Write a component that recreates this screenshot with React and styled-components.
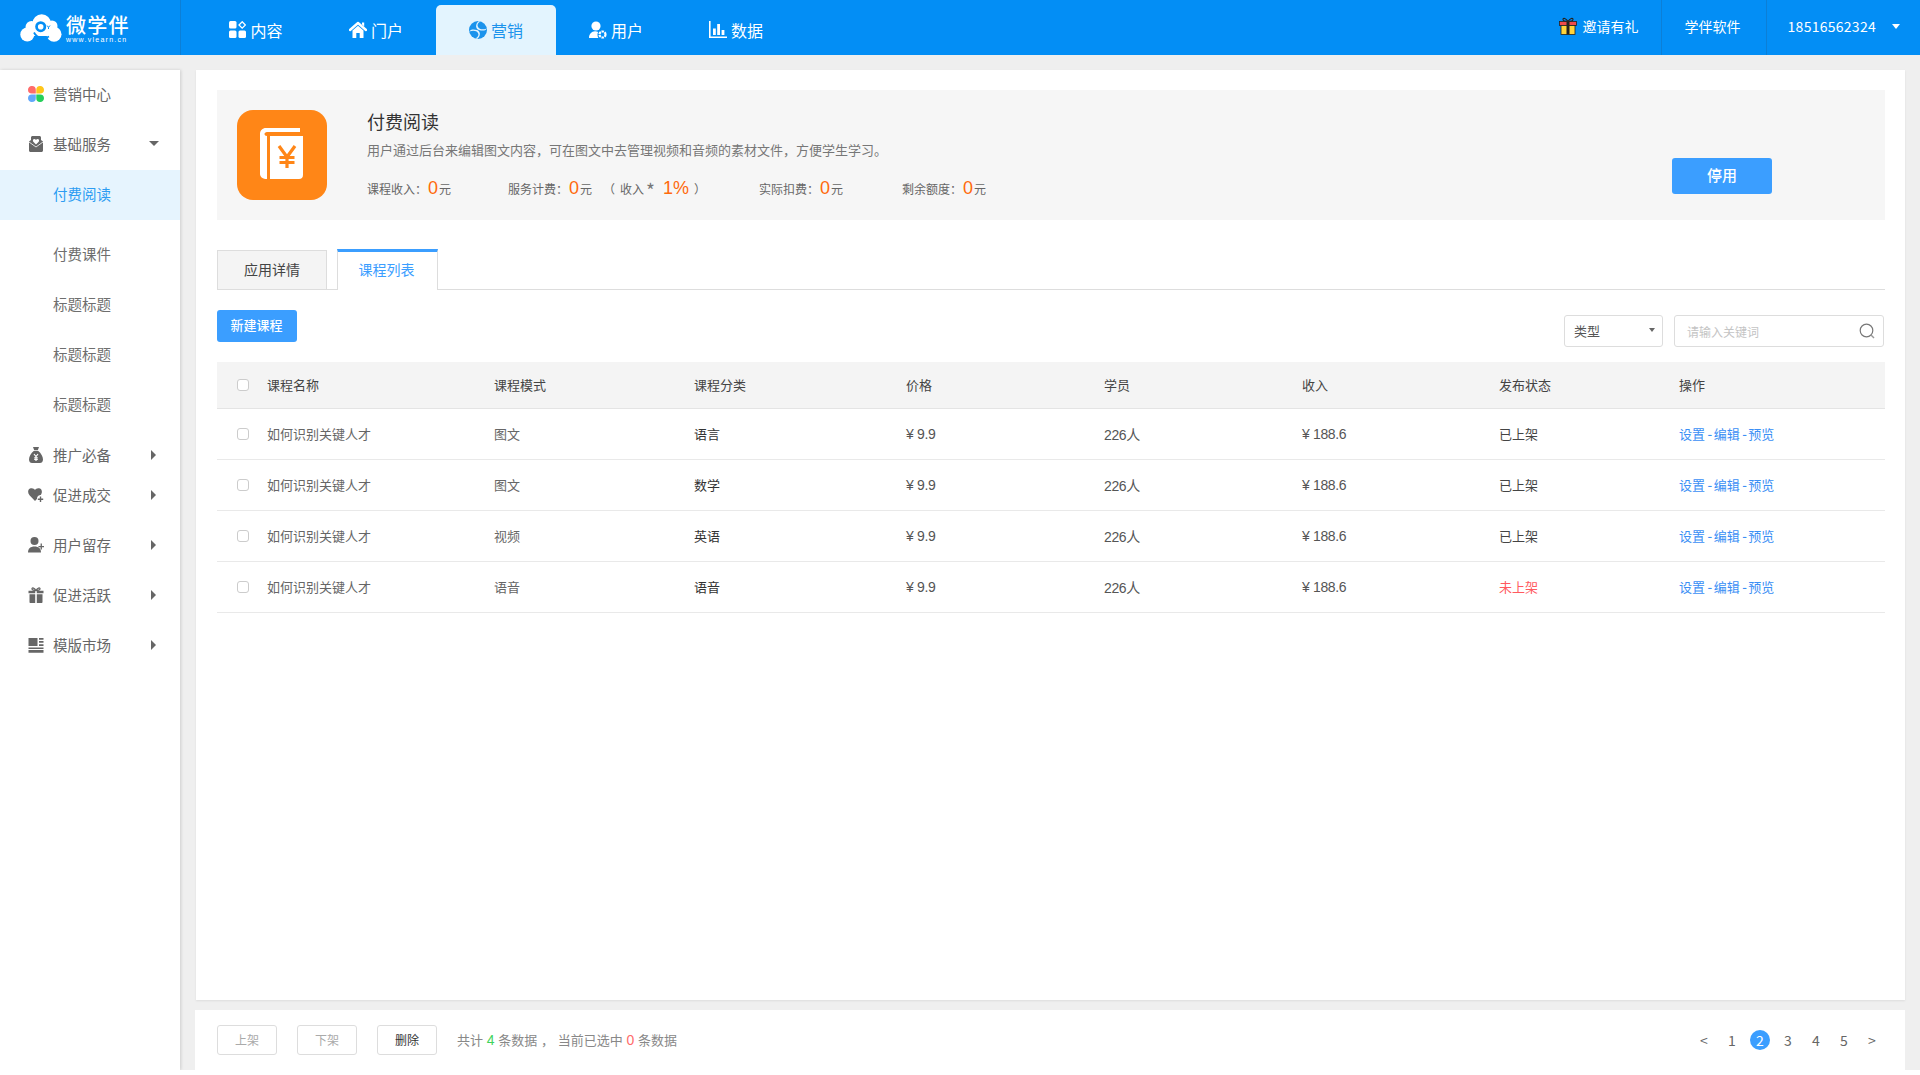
import React from "react";
import styled, { createGlobalStyle } from "styled-components";

const Global = createGlobalStyle`
  html, body { margin: 0; padding: 0; background: #fff; }
  body { font-family: "Liberation Sans", "Noto Sans CJK SC", sans-serif; color: #333; }
  * { box-sizing: border-box; }
`;

const Page = styled.div`
  width: 1920px; height: 1070px; overflow: hidden; background: #efefef;
  display: flex; flex-direction: column;
`;
const TopBar = styled.header`
  height: 55px; flex: none; background: #038ef5; display: flex; color: #fff;
  font-family: "Noto Sans CJK SC", sans-serif;
`;
const LogoBox = styled.div`
  width: 181px; flex: none; display: flex; align-items: center; padding-left: 20px; gap: 4px;
  border-right: 1px solid #0c7fd6;
`;
const LogoText = styled.div`display: flex; flex-direction: column; margin-top: 2px;`;
const LogoName = styled.div`font-size: 20px; line-height: 22px; letter-spacing: 1.2px; font-weight: 500;`;
const LogoSub = styled.div`
  font-family: "Liberation Sans", sans-serif; font-size: 7px; line-height: 9px; letter-spacing: 1.25px; margin-top: -1px;
`;
const Nav = styled.nav`display: flex; padding-left: 15px; align-items: flex-end; height: 55px;`;
const NavItem = styled.div`
  width: 120px; height: 50px; display: flex; align-items: center; justify-content: center; gap: 4px;
  padding-bottom: 1px; font-size: 16px; border-radius: 5px 5px 0 0;
  background: ${p => (p.$active ? "#e3f4fe" : "transparent")};
  color: ${p => (p.$active ? "#1b93ec" : "#fff")};
`;
const TopRight = styled.div`margin-left: auto; display: flex; font-size: 14px;`;
const Invite = styled.div`display: flex; align-items: center; gap: 6px; padding: 0 22px 3px 0;`;
const TopCell = styled.div`
  display: flex; align-items: center; border-left: 1px solid #0c7fd6; padding: 0 ${p => p.$pr}px 3px ${p => p.$pl}px;
  letter-spacing: ${p => p.$ls || 0}px;
`;
const PhoneGap = styled.span`width: 16px;`;
const CaretDown = styled.span`
  display: inline-block; width: 0; height: 0;
  border-left: ${p => p.$s}px solid transparent; border-right: ${p => p.$s}px solid transparent;
  border-top: ${p => p.$h}px solid ${p => p.$c};
  margin-right: ${p => p.$mr || 0}px;
`;
const CaretRight = styled.span`
  display: inline-block; width: 0; height: 0;
  border-top: 5px solid transparent; border-bottom: 5px solid transparent; border-left: 5px solid #666;
`;
const Body = styled.div`flex: 1; display: flex; padding-top: 15px; min-height: 0;`;
const Sidebar = styled.aside`
  width: 180px; flex: none; background: #fff; box-shadow: 1px 0 3px rgba(0,0,0,.14);
  font-family: "Noto Sans CJK SC", sans-serif; font-size: 14.5px; color: #666;
`;
const MenuRow = styled.div`
  height: ${p => p.$h || 50}px; margin-top: ${p => p.$mt || 0}px; display: flex; align-items: center;
  padding: 0 24px 3px 28px; gap: 9px;
`;
const IconSlot = styled.span`width: 16px; height: 16px; flex: none; display: flex;`;
const MenuLabel = styled.span`flex: 1;`;
const SubRow = styled.div`
  height: 50px; margin-top: ${p => p.$mt || 0}px; display: flex; align-items: center; padding: 0 0 3px 53px;
  background: ${p => (p.$active ? "#e6f4fe" : "transparent")};
  color: ${p => (p.$active ? "#2c9cf2" : "#6e6e6e")};
`;
const Content = styled.div`flex: 1; display: flex; flex-direction: column; gap: 10px; margin: 0 15px; min-width: 0;`;
const Main = styled.main`
  height: 930px; flex: none; background: #fff; padding: 20px 20px 0 21px; margin-left: 1px; box-shadow: 0 1px 2px rgba(0,0,0,.08);
`;
const Banner = styled.section`height: 130px; background: #f6f6f6; display: flex; padding: 20px;`;
const AppIcon = styled.div`
  width: 90px; height: 90px; flex: none; border-radius: 16px; background: #ff8617; display: flex;
`;
const BannerText = styled.div`margin-left: 40px; font-family: "Noto Sans CJK SC", sans-serif;`;
const Title = styled.h1`margin: -2px 0 0; font-size: 18px; line-height: 26px; font-weight: 400; color: #333;`;
const Desc = styled.p`margin: 7px 0 0; font-size: 13px; line-height: 18px; color: #777;`;
const Stats = styled.div`display: flex; margin-top: 19px; height: 24px; align-items: baseline; font-size: 12px; color: #666;`;
const Stat = styled.div`width: ${p => p.$w}px; flex: none; white-space: pre;`;
const Num = styled.span`
  font-family: "Liberation Sans", sans-serif; font-size: 18px; color: #ff6a0c;
  margin: 0 1px 0 ${p => p.$ml ?? 1}px;
`;
const Sep = styled.span`margin-left: ${p => p.$ml}px;`;
const Star = styled.span`margin-left: 2px; font-size: 19px; line-height: 1; vertical-align: -4px; color: #777;`;
const StopButton = styled.button`
  margin: 48px 93px 0 auto; width: 100px; height: 36px; border: 0; border-radius: 3px; background: #3b9eff; color: #fff; padding: 0 0 4px;
  font: 500 15px "Noto Sans CJK SC", sans-serif;
`;
const Tabs = styled.div`
  margin-top: 29px; height: 41px; display: flex; gap: 10px; border-bottom: 1px solid #ddd; align-items: flex-end;
  font-family: "Noto Sans CJK SC", sans-serif; font-size: 14px;
`;
const Tab = styled.div`
  width: ${p => (p.$active ? 101 : 110)}px; height: ${p => (p.$active ? 41 : 40)}px; display: flex; align-items: center; justify-content: center;
  margin-bottom: -1px;
  padding: 0 ${p => (p.$active ? 2 : 0)}px ${p => (p.$active ? 5 : 2)}px 0;
  background: ${p => (p.$active ? "#fff" : "#f4f4f4")};
  color: ${p => (p.$active ? "#3b9eff" : "#444")};
  border: 1px solid #ddd;
  border-top: ${p => (p.$active ? "3px solid #3b9eff" : "1px solid #ddd")};
  border-bottom: ${p => (p.$active ? "0" : "1px solid #ddd")};
`;
const Toolbar = styled.div`margin-top: 20px; height: 37px; display: flex; justify-content: space-between; font-family: "Noto Sans CJK SC", sans-serif;`;
const NewButton = styled.button`
  width: 80px; height: 32px; border: 0; border-radius: 3px; background: #3b9eff; color: #fff; padding: 0 1px 4px 0;
  font: 500 13px "Noto Sans CJK SC", sans-serif;
`;
const Filters = styled.div`display: flex; gap: 11px; margin-top: 5px; padding-right: 1px;`;
const Select = styled.div`
  width: 99px; height: 32px; border: 1px solid #ddd; border-radius: 3px; display: flex; align-items: center; justify-content: space-between;
  padding: 0 7px 2px 9px; font-size: 13px; color: #555;
`;
const SearchBox = styled.div`
  width: 210px; height: 32px; border: 1px solid #ddd; border-radius: 3px; display: flex; align-items: center; justify-content: space-between;
  padding: 0 8px 0 12px; font-size: 12px; color: #c4c4c4;
`;
const cols = "50px 227px 200px 212px 198px 198px 197px 180px 1fr";
const TableHead = styled.div`
  margin-top: 15px; height: 47px; background: #f4f4f4; border-bottom: 1px solid #e4e4e4; padding-bottom: 2px;
  display: grid; grid-template-columns: ${cols}; align-items: center; font-size: 13px; color: #444;
  font-family: "Noto Sans CJK SC", sans-serif;
`;
const TableRow = styled.div`
  height: 51px; border-bottom: 1px solid #e9e9e9; padding-bottom: 2px;
  display: grid; grid-template-columns: ${cols}; align-items: center; font-size: 13px; color: #666;
`;
const CheckCell = styled.div`padding: 2px 0 0 20px; display: flex;`;
const Check = styled.span`width: 12px; height: 12px; border: 1px solid #ccc; border-radius: 3px; background: #fff;`;
const Cell = styled.div`color: ${p => p.$c || "inherit"}; white-space: nowrap;`;
const NumCell = styled.div`font-size: 14px; letter-spacing: -.35px; white-space: nowrap; color: #555; padding-top: 1px;`;
const Ops = styled.div`display: flex; color: #3b8ff5; white-space: nowrap;`;
const Dash = styled.span`margin: 0 1.500px 0 2.500px; font-family: "Noto Sans CJK SC", sans-serif; font-weight: 500;`;
const Footer = styled.footer`
  height: 60px; flex: none; background: #fff; display: flex; align-items: center; padding: 0 19px 0 22px; font-family: "Noto Sans CJK SC", sans-serif;
`;
const FootBtn = styled.button`
  width: 60px; height: 30px; margin-right: 20px; border: 1px solid #ddd; border-radius: 3px; background: #fff; padding: 0 0 2px;
  font: 12px "Noto Sans CJK SC", sans-serif; color: ${p => (p.$on ? "#333" : "#aaa")};
`;
const Summary = styled.div`font-size: 13px; color: #888; white-space: pre; word-spacing: .8px; padding-bottom: 2px;`;
const Hi = styled.span`font-family: "Liberation Sans", sans-serif; font-size: 14px; color: ${p => p.$c};`;
const Pager = styled.div`margin-left: auto; display: flex; font-size: 14px; color: #666;`;
const PageItem = styled.span`
  width: 28px; height: 20px; display: flex; align-items: center; justify-content: center; position: relative;
  color: ${p => (p.$active ? "#fff" : "#666")}; z-index: 0;
  ${p => p.$active && `&::before { content: ""; position: absolute; left: 4px; top: 0; width: 20px; height: 20px; border-radius: 50%; background: #3b9eff; z-index: -1; }`}
`;

const Svg = ({ s = 16, h, children }) => (
  <svg width={s} height={h || s} viewBox={`0 0 ${s} ${h || s}`} style={{ display: "block", flex: "none" }}>{children}</svg>
);

const LogoCloud = () => (
  <Svg s={42} h={28}>
    <circle cx="21.700" cy="9.500" r="9.300" fill="#fff" />
    <circle cx="11.500" cy="13" r="6" fill="#fff" />
    <circle cx="7.300" cy="20.500" r="7" fill="#fff" />
    <circle cx="32" cy="12" r="5.500" fill="#fff" />
    <circle cx="34" cy="20.300" r="7.500" fill="#fff" />
    <rect x="8" y="14" width="26" height="8" fill="#fff" />
    <circle cx="20.700" cy="12.700" r="5.500" fill="#038ef5" />
    <circle cx="20.700" cy="12.700" r="2.800" fill="#fff" />
    <path d="M14 18.500c3 6 10 7 15 4" fill="none" stroke="#038ef5" strokeWidth="1.800" />
    <path d="M15 28c1-2 2-3.500 3-4.500 2 1.500 5 2 8 1 .5 1 1 2.500 1.500 3.500z" fill="#038ef5" />
    <path d="M27 11.500l1.500 1.800 1.500-1.800M28.500 13.300v1.700" stroke="#038ef5" strokeWidth="1" fill="none" />
  </Svg>
);
const IconContent = () => (
  <Svg s={17}>
    <rect x="0" y="0" width="7.500" height="7.500" rx="1.500" fill="#fff" />
    <rect x="0" y="9.500" width="7.500" height="7.500" rx="1.500" fill="#fff" />
    <rect x="9.500" y="9.500" width="7.500" height="7.500" rx="1.500" fill="#fff" />
    <path d="M13.200 .8l3.200 3.200-3.200 3.200-3.200-3.200z" fill="none" stroke="#fff" strokeWidth="1.300" />
  </Svg>
);
const IconHome = () => (
  <Svg s={18} h={17}>
    <path d="M1 9L9 2l8 7" fill="none" stroke="#fff" strokeWidth="2.400" strokeLinecap="round" strokeLinejoin="round" />
    <path fill="#fff" d="M3.500 9.500L9 4.800l5.500 4.700V17h-3.800v-5H7.300v5H3.500zM13 1.500h2.200v4L13 3.500z" />
  </Svg>
);
const IconMarket = () => (
  <Svg s={18}>
    <circle cx="9" cy="9" r="9" fill="#1b93ec" />
    <path fill="#e3f4fe" d="M11.500 .6C9 1.800 7.800 3.800 9 6c1.500 2.500 4.700 3 8.800 1.500C16.500 10 13 10 10 9 6.500 7.800 6 3.500 9.500.2zM6.500 17.400C9 16.200 10.200 14.200 9 12c-1.500-2.500-4.700-3-8.800-1.500C1.500 8 5 8 8 9c3.500 1.200 4 5.500.5 8.800z" />
  </Svg>
);
const IconUser = () => (
  <Svg s={18}>
    <circle cx="7" cy="5" r="4.600" fill="#fff" />
    <path fill="#fff" d="M0 17c0-4 2.500-6.500 6-6.700 1.200 0 2.200.2 3.200.8-1 1.500-1 4 .2 5.900z" />
    <circle cx="13.500" cy="13.500" r="3" fill="none" stroke="#fff" strokeWidth="2.200" strokeDasharray="2.400 .8" />
  </Svg>
);
const IconData = () => (
  <Svg s={18}>
    <path fill="#fff" d="M0 0h1.600v15.400H18V17H0zM4 7.500h2.800v6.400H4zM8.200 3h2.800v10.900H8.200zM12.600 9h2.800v4.900h-2.800z" />
  </Svg>
);
const IconGift = () => (
  <Svg s={18}>
    <path d="M9 4.500C7 1 4 .5 4 2.500s3 2 5 2zm0 0c2-3.500 5-4 5-2s-3 2-5 2z" fill="none" stroke="#222" strokeWidth="1.100" />
    <rect x=".5" y="4.500" width="17" height="4" fill="#f04a4a" stroke="#222" strokeWidth=".8" />
    <rect x="2" y="8.500" width="14" height="9" fill="#ffd43b" stroke="#222" strokeWidth=".8" />
    <rect x="7.500" y="4.500" width="3" height="13" fill="#222" />
  </Svg>
);
const IconPetals = () => (
  <Svg>
    <path fill="#ff6b6b" d="M4 0a3.800 3.800 0 0 1 3.800 3.800v3.800H3.800A3.800 3.800 0 0 1 0 3.800 3.800 3.800 0 0 1 4 0z" />
    <path fill="#ffc61a" d="M12 0a3.800 3.800 0 0 0-3.700 3.800v3.800h3.900A3.800 3.800 0 0 0 16 3.800 3.800 3.800 0 0 0 12 0z" />
    <path fill="#62a8fb" d="M4 16a3.800 3.800 0 0 0 3.800-3.800V8.400H3.800A3.800 3.800 0 0 0 0 12.200 3.800 3.800 0 0 0 4 16z" />
    <path fill="#26cf5a" d="M12 16a3.800 3.800 0 0 1-3.700-3.800V8.400h3.900a3.800 3.800 0 0 1 3.800 3.800A3.800 3.800 0 0 1 12 16z" />
  </Svg>
);
const IconMail = () => (
  <Svg>
    <path fill="#666" d="M1 5.500L3 4V1.500C3 .7 3.700 0 4.500 0h7c.8 0 1.500.7 1.500 1.500V4l2 1.500V14.500c0 .8-.7 1.500-1.500 1.500h-11C1.700 16 1 15.300 1 14.500z" />
    <path fill="#fff" d="M8 8.500L5.300 5.800C4.500 4.800 5 3 6.300 3c.8 0 1.300.4 1.700 1 .4-.6.900-1 1.700-1C11 3 11.500 4.800 10.700 5.800z" />
    <path fill="none" stroke="#fff" strokeWidth=".8" d="M1 6l7 5 7-5" />
  </Svg>
);
const IconBag = () => (
  <Svg>
    <path fill="#666" d="M5 0h6L9.800 3.300H6.200zM5.700 4h4.600C13 6 15 9.500 15 12.500c0 2.500-1.500 3.500-3 3.500H4c-1.500 0-3-1-3-3.500C1 9.500 3 6 5.700 4z" />
    <path fill="none" stroke="#fff" strokeWidth="1.200" d="M6 7l2 2.500L10 7M8 9.500V14M6.200 10.800h3.600M6.200 12.500h3.600" />
  </Svg>
);
const IconHeartPlus = () => (
  <Svg>
    <path fill="#666" d="M7 14L1.500 8.300C-.5 6-.3 2.700 2 1.600 4 .6 6 1.400 7 3c1-1.600 3-2.400 5-1.400 2.300 1.100 2.500 4.400.5 6.700z" />
    <path fill="#fff" d="M12.500 8a3.500 3.500 0 1 0 .01 0z" />
    <path fill="#666" d="M11.800 9.500h1.400v2h2v1.400h-2v2h-1.400v-2h-2v-1.400h2z" />
  </Svg>
);
const IconUserPlus = () => (
  <Svg>
    <circle cx="6.500" cy="4" r="4" fill="#666" />
    <path fill="#666" d="M0 15.500c0-4 2.500-6 6.500-6s6.500 2 6.500 6z" />
    <path fill="#666" d="M12.600 6.500h1.300V9H16v1.300h-2.100v2.200h-1.300v-2.200h-2.100V9h2.100z" />
  </Svg>
);
const IconGiftGray = () => (
  <Svg>
    <path fill="none" stroke="#666" strokeWidth="1.300" d="M8 3.500C6.500.8 4 .3 4 1.800S6.500 3.500 8 3.500zm0 0C9.500.8 12 .3 12 1.800S9.500 3.500 8 3.500z" />
    <path fill="#666" d="M.5 3.800h6.700v2.500H.5zM8.800 3.800h6.700v2.500H8.800zM1.500 7.300h5.700V16H2.500c-.6 0-1-.4-1-1zM8.800 7.300h5.700V15c0 .6-.4 1-1 1H8.800z" />
  </Svg>
);
const IconLayout = () => (
  <Svg>
    <path fill="#666" d="M.5 1h9v8h-9zM11 1h4.500v1.800H11zM11 4h4.500v1.800H11zM11 7.200h4.500V9H11zM.5 10.500h15V12h-15zM.5 13h15v2.800H.5z" />
  </Svg>
);
const BookIcon = () => (
  <Svg s={90}>
    <path fill="#fff" d="M23 24c0-3.500 2.500-6 6-6h34v4H30c-1.500 0-2.500 1-2.500 2s1 2 2.500 2v43c-4 0-7-2-7-5z" />
    <path fill="#fff" d="M33 26h33v39c0 2.500-1.500 4-4 4H33z" />
    <path fill="none" stroke="#ff8617" strokeWidth="3.200" d="M42 36l8 11 8-11M50 47v11M42.500 47.500h15M42.500 52.500h15" />
  </Svg>
);
const SearchIcon = () => (
  <Svg s={16}>
    <circle cx="7.500" cy="7.500" r="6.300" fill="none" stroke="#777" strokeWidth="1.200" />
    <path d="M12 12l3 3" stroke="#999" strokeWidth="1.400" />
  </Svg>
);

const rows = [
  ["图文", "语言", "已上架"],
  ["图文", "数学", "已上架"],
  ["视频", "英语", "已上架"],
  ["语音", "语音", "未上架", "#ff5a5f"],
];
const navs = [
  ["内容", <IconContent />],
  ["门户", <IconHome />],
  ["营销", <IconMarket />, true],
  ["用户", <IconUser />],
  ["数据", <IconData />],
];
const closed = [
  ["推广必备", <IconBag />, 50, 1],
  ["促进成交", <IconHeartPlus />, 30, 0],
  ["用户留存", <IconUserPlus />, 50, 10],
  ["促进活跃", <IconGiftGray />, 50, 0],
  ["模版市场", <IconLayout />, 50, 0],
];

export default function App() {
  return (
    <Page>
      <Global />
      <TopBar>
        <LogoBox>
          <LogoCloud />
          <LogoText>
            <LogoName>微学伴</LogoName>
            <LogoSub>www.vlearn.cn</LogoSub>
          </LogoText>
        </LogoBox>
        <Nav>
          {navs.map(([t, ic, a]) => (
            <NavItem key={t} $active={a}>{ic}{t}</NavItem>
          ))}
        </Nav>
        <TopRight>
          <Invite><IconGift />邀请有礼</Invite>
          <TopCell $pl={23} $pr={25}>学伴软件</TopCell>
          <TopCell $pl={21} $pr={20} $ls={0.27}>18516562324<PhoneGap /><CaretDown $s={4} $h={5} $c="#fff" /></TopCell>
        </TopRight>
      </TopBar>
      <Body>
        <Sidebar>
          <MenuRow><IconSlot><IconPetals /></IconSlot><MenuLabel>营销中心</MenuLabel></MenuRow>
          <MenuRow><IconSlot><IconMail /></IconSlot><MenuLabel>基础服务</MenuLabel><CaretDown $s={5} $h={5} $c="#666" $mr={-3} /></MenuRow>
          <SubRow $active>付费阅读</SubRow>
          <SubRow $mt={10}>付费课件</SubRow>
          <SubRow>标题标题</SubRow>
          <SubRow>标题标题</SubRow>
          <SubRow>标题标题</SubRow>
          {closed.map(([t, ic, h, mt]) => (
            <MenuRow key={t} $h={h} $mt={mt}><IconSlot>{ic}</IconSlot><MenuLabel>{t}</MenuLabel><CaretRight /></MenuRow>
          ))}
        </Sidebar>
        <Content>
          <Main>
            <Banner>
              <AppIcon><BookIcon /></AppIcon>
              <BannerText>
                <Title>付费阅读</Title>
                <Desc>用户通过后台来编辑图文内容，可在图文中去管理视频和音频的素材文件，方便学生学习。</Desc>
                <Stats>
                  <Stat $w={141}>课程收入：<Num>0</Num>元</Stat>
                  <Stat $w={251}>服务计费：<Num>0</Num>元<Sep $ml={11}>（</Sep><Sep $ml={5}>收入</Sep><Star>*</Star><Num $ml={8}>1%</Num><Sep $ml={4}>）</Sep></Stat>
                  <Stat $w={143}>实际扣费：<Num>0</Num>元</Stat>
                  <Stat $w={100}>剩余额度：<Num>0</Num>元</Stat>
                </Stats>
              </BannerText>
              <StopButton>停用</StopButton>
            </Banner>
            <Tabs>
              <Tab>应用详情</Tab>
              <Tab $active>课程列表</Tab>
            </Tabs>
            <Toolbar>
              <NewButton>新建课程</NewButton>
              <Filters>
                <Select>类型<CaretDown $s={3.5} $h={4} $c="#666" /></Select>
                <SearchBox>请输入关键词<SearchIcon /></SearchBox>
              </Filters>
            </Toolbar>
            <TableHead>
              <CheckCell><Check /></CheckCell>
              <Cell>课程名称</Cell><Cell>课程模式</Cell><Cell>课程分类</Cell><Cell>价格</Cell>
              <Cell>学员</Cell><Cell>收入</Cell><Cell>发布状态</Cell><Cell>操作</Cell>
            </TableHead>
            {rows.map(([mode, cat, status, c], i) => (
              <TableRow key={i}>
                <CheckCell><Check /></CheckCell>
                <Cell>如何识别关键人才</Cell>
                <Cell>{mode}</Cell>
                <Cell $c="#333">{cat}</Cell>
                <NumCell>¥ 9.9</NumCell>
                <NumCell>226人</NumCell>
                <NumCell>¥ 188.6</NumCell>
                <Cell $c={c || "#444"}>{status}</Cell>
                <Ops>设置<Dash>-</Dash>编辑<Dash>-</Dash>预览</Ops>
              </TableRow>
            ))}
          </Main>
          <Footer>
            <FootBtn>上架</FootBtn>
            <FootBtn>下架</FootBtn>
            <FootBtn $on>删除</FootBtn>
            <Summary>共计 <Hi $c="#3fd35c">4</Hi> 条数据 ， 当前已选中 <Hi $c="#ff6b6b">0</Hi> 条数据</Summary>
            <Pager>
              {["<", "1", "2", "3", "4", "5", ">"].map((p, i) => (
                <PageItem key={i} $active={p === "2"}>{p}</PageItem>
              ))}
            </Pager>
          </Footer>
        </Content>
      </Body>
    </Page>
  );
}
